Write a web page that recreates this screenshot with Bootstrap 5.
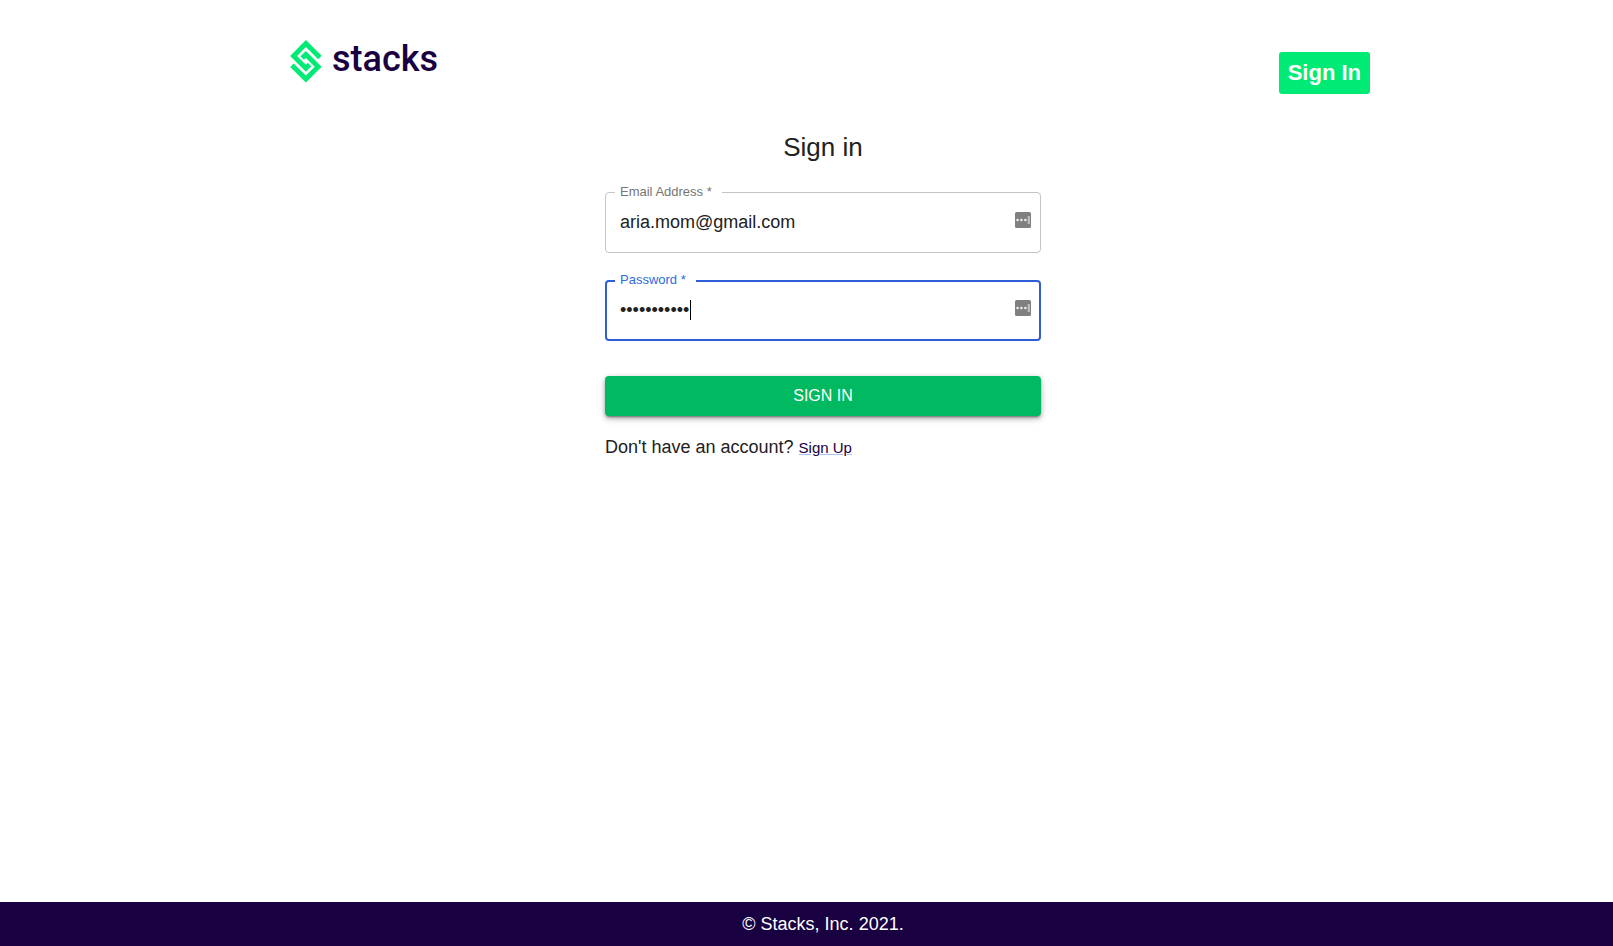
<!DOCTYPE html>
<html lang="en">
<head>
<meta charset="utf-8">
<meta name="viewport" content="width=device-width, initial-scale=1">
<title>Stacks - Sign in</title>
<link href="https://cdn.jsdelivr.net/npm/bootstrap@5.3.0/dist/css/bootstrap.min.css" rel="stylesheet">
<style>
  body { font-family: "Liberation Sans", Arial, sans-serif; font-size: 18px; line-height: 26px; color: #212121; background: #fff; }
  /* header and form are centred slightly right of the window's middle */
  .site-header { max-width: 1127px; padding: 32px 0 0 47px; }
  .page-shift { padding-left: 33px; }
  .brand { color: #190041; font: 500 36px/38px Roboto, sans-serif; gap: 10px; padding-top: 8px; }
  .brand-mark { width: 32px; height: 43px; }
  .btn-top { background: #00eb75; color: #fff; font-size: 22px; font-weight: 700; line-height: 28px; padding: 7px 9px; border: 0; border-radius: 3px; margin-top: 20px; }
  .btn-top:hover { background: #00d66b; color: #fff; }
  .signin { width: 436px; max-width: 100%; padding-top: 35px; }
  .signin h1 { font-size: 26px; line-height: 36px; margin-bottom: 27px; }
  .field { margin-bottom: 27px; }
  .field input { height: 61px; padding: 0 44px 0 14px; border: 1px solid #c4c4c4; border-radius: 4px; font-size: 18px; color: #212121; background: #fff; box-shadow: none; }
  .field label { position: absolute; top: -9px; left: 10px; padding: 0 10px 0 5px; background: #fff; font-size: 13px; line-height: 18px; color: #757575; }
  .field.active input { border: 2px solid #2e5fd9; padding-left: 13px; }
  .field.active label { color: #2e6adf; }
  .field svg { position: absolute; top: 20px; right: 10px; }
  .caret { position: absolute; left: 85px; top: 20px; width: 1px; height: 20px; background: #000; }
  .btn-main { margin-top: 8px; height: 40px; padding: 0; border: 0; border-radius: 4px; background: #00b960; color: #fff; font-size: 16px; box-shadow: 0 3px 1px -2px rgba(0,0,0,.2), 0 2px 2px rgba(0,0,0,.14), 0 1px 5px rgba(0,0,0,.12), 0 3px 6px rgba(0,0,0,.25); }
  .btn-main:hover { background: #00a857; color: #fff; }
  .signup { margin: 18px 0 0; }
  .signup a { color: #190041; font-size: 15px; text-decoration-color: #a9c3f5; }
  .site-footer { background: #190041; color: #fff; padding-top: 9px; padding-bottom: 9px; }
</style>
</head>
<body class="d-flex flex-column min-vh-100">
<header class="site-header w-100 mx-auto d-flex justify-content-between align-items-start">
  <a class="brand d-flex align-items-start text-decoration-none" href="#" aria-label="stacks">
    <svg class="brand-mark" viewBox="0 0 32 43" fill="none" stroke="#00eb75" stroke-width="4.9" aria-hidden="true">
      <path d="M29.9 17.4L15.9 3.5L3.6 15.9L15.9 28.2L19.6 24.5"/>
      <path d="M1.9 25.2L15.9 39.1L28.2 26.7L15.9 14.4L12.2 18.1"/>
    </svg>
    <span>stacks</span>
  </a>
  <button class="btn btn-top" type="button">Sign In</button>
</header>

<main class="page-shift flex-grow-1">
  <form class="signin mx-auto" onsubmit="return false">
    <h1 class="text-center fw-normal">Sign in</h1>
    <div class="field position-relative">
      <input class="form-control" id="email" type="email" value="aria.mom@gmail.com" required>
      <label for="email">Email Address *</label>
      <svg width="16" height="16" viewBox="0 0 16 16" aria-hidden="true"><rect width="16" height="16" rx="1.5" fill="#808080"/><g fill="#eee"><circle cx="2.6" cy="8" r="1.3"/><circle cx="6.4" cy="8" r="1.3"/><circle cx="10.4" cy="8" r="1.3"/><path fill="#c4c4c4" d="M12.8 4h2v8h-2z"/></g></svg>
    </div>
    <div class="field active position-relative">
      <input class="form-control" id="password" type="password" value="stacks-2021" required>
      <label for="password">Password *</label>
      <span class="caret"></span>
      <svg width="16" height="16" viewBox="0 0 16 16" aria-hidden="true"><rect width="16" height="16" rx="1.5" fill="#808080"/><g fill="#eee"><circle cx="2.6" cy="8" r="1.3"/><circle cx="6.4" cy="8" r="1.3"/><circle cx="10.4" cy="8" r="1.3"/><path fill="#c4c4c4" d="M12.8 4h2v8h-2z"/></g></svg>
    </div>
    <button class="btn btn-main w-100" type="submit">SIGN IN</button>
    <p class="signup">Don't have an account? <a href="#">Sign Up</a></p>
  </form>
</main>

<footer class="site-footer page-shift text-center">© Stacks, Inc. 2021.</footer>
<script src="https://cdn.jsdelivr.net/npm/bootstrap@5.3.0/dist/js/bootstrap.bundle.min.js"></script>
</body>
</html>
